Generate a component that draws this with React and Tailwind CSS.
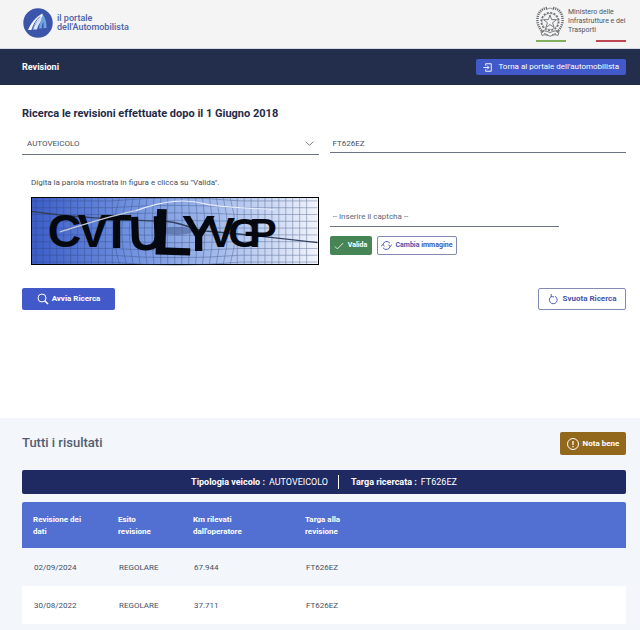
const results = [
  { date: "02/09/2024", outcome: "REGOLARE", km: "67.944", plate: "FT626EZ" },
  { date: "30/08/2022", outcome: "REGOLARE", km: "37.711", plate: "FT626EZ" },
];

const captchaLetters = [
  { char: "C", x: 16, y: 50, size: 47, rotate: 0 },
  { char: "V", x: 46, y: 50, size: 47, rotate: 0 },
  { char: "T", x: 70, y: 52, size: 50, rotate: 0 },
  { char: "U", x: 98, y: 54, size: 50, rotate: -2 },
  { char: "L", x: 120, y: 58, size: 68, rotate: 2 },
  { char: "Y", x: 151, y: 55, size: 51, rotate: 0 },
  { char: "V", x: 176, y: 51, size: 43, rotate: 0 },
  { char: "G", x: 198, y: 51, size: 42, rotate: 0 },
  { char: "P", x: 219, y: 50, size: 42, rotate: 0 },
];

function PortalLogo() {
  return (
    <svg viewBox="0 0 30 30" className="size-[30px] shrink-0" aria-hidden="true">
      <circle cx="15" cy="15" r="14.7" fill="#3a55a9" />
      <path d="M5 22C8 15 12.500 9 19.500 5.500l.5 3C15 11.500 11.500 16 9 22z" fill="#f4f7fd" />
      <path d="M10 21.500C12 16 15 11.500 20 8.500l-.5 4c-3 2-4.500 5-5.500 9z" fill="#d8e6fa" />
      <path d="M17 8.500C13 12 10.500 16.500 8.800 22" fill="none" stroke="#3a55a9" strokeWidth=".9" />
      <path d="M16 20.500c.5-4.500 1.700-8.500 4-14 2.700 4 3.700 9 3.500 13.500l-3 .3c.2-2.500.2-4.600-.3-6.600-.9 2-1.300 4.300-1.400 6.700z" fill="#6fa3e3" />
    </svg>
  );
}

function RepublicEmblem() {
  const star = "M14 9l1.600 4.600 4.900.1-3.900 3 1.400 4.700-4-2.800-4 2.800 1.400-4.700-3.900-3 4.900-.1z";
  return (
    <svg viewBox="0 0 28 32" className="h-8 w-7 shrink-0" fill="none" stroke="#6b6e72" aria-hidden="true">
      <circle cx="14" cy="15.500" r="8.800" strokeWidth="1.500" strokeDasharray="2 1.450" />
      <circle cx="14" cy="15.500" r="8" strokeWidth=".5" />
      <path d="M11 2C4 3 .8 9 1.500 15.500 2 20 4 23.500 7.500 26" strokeWidth="2.400" strokeDasharray="1.200 .9" />
      <path d="M17 2c7 1 10.200 7 9.500 13.500-.5 4.500-2.500 8-6 10.500" strokeWidth="2.400" strokeDasharray="1.200 .9" />
      <path d="M10 3.500Q14 .5 18 3.500" strokeWidth=".7" />
      <path d={star} strokeWidth=".9" fill="#f4f4f4" />
      <path d="M5 25.500c2.500-1.500 5-.5 9 1 4-1.500 6.500-2.500 9-1l-1 4c-2.500-1.500-5-.3-8 .7-3-1-5.500-2.200-8-.7z" strokeWidth=".9" />
      <path d="M8 27.500l4 1.200M20 27.500l-4 1.200" strokeWidth=".8" />
    </svg>
  );
}

function CaptchaImage() {
  const columns = Array.from({ length: 40 }, (_, i) => i * 7 + 4);
  const rows = Array.from({ length: 10 }, (_, i) => i * 7 + 3);
  return (
    <svg
      viewBox="0 0 288 68"
      preserveAspectRatio="none"
      className="block h-[68px] w-full overflow-visible border border-black"
      role="img"
      aria-label="Captcha"
    >
      <defs>
        <linearGradient id="captcha-bg">
          <stop offset="0" stopColor="#3c5dc9" />
          <stop offset=".35" stopColor="#7192df" />
          <stop offset=".65" stopColor="#a3baeb" />
          <stop offset="1" stopColor="#f0f3fb" />
        </linearGradient>
      </defs>
      <rect width="288" height="68" fill="url(#captcha-bg)" />
      <g fill="none" stroke="#2c4272" strokeWidth=".6" opacity=".6">
        {columns.map((x) => {
          const pull = Math.abs(x - 145) < 62 ? (x - 145) * 0.18 : 0;
          return <path key={x} d={`M${x} 0Q${x + pull} 34 ${x} 68`} />;
        })}
        {rows.map((y) => {
          const bend = (y - 34) * 0.2;
          return <path key={y} d={`M0 ${y}H80Q145 ${y + bend} 210 ${y}H288`} />;
        })}
      </g>
      <ellipse cx="146" cy="34" rx="16" ry="4" fill="#4b6395" opacity=".6" />
      <path d="M0 14C40 20 85 22 130 24c22 0 28 8 45 10 45 4 80 8 113 12" fill="none" stroke="#33425f" strokeWidth="1.500" />
      <g fontFamily="'Liberation Sans', Arial, sans-serif" fontWeight="700" fill="#05080f">
        {captchaLetters.map((l, i) => (
          <text key={i} x={l.x} y={l.y} fontSize={l.size} transform={`rotate(${l.rotate} ${l.x} ${l.y})`}>
            {l.char}
          </text>
        ))}
      </g>
      <path d="M28 35C60 25 80 18 105 13" fill="none" stroke="#c5cbd8" strokeWidth="1.200" />
      <path d="M105 13C135 2 155 1 175 6c15 4 40 4 70 6" fill="none" stroke="#e5ebfa" strokeWidth="1.200" />
    </svg>
  );
}

function Icon({ className, children }) {
  return (
    <svg
      viewBox="0 0 24 24"
      className={className}
      fill="none"
      stroke="currentColor"
      strokeWidth="2"
      aria-hidden="true"
    >
      {children}
    </svg>
  );
}

export default function App() {
  return (
    <div className="min-h-screen bg-white font-['Roboto','Open_Sans',sans-serif] text-[8px] text-[#435063]">
      {/* Header */}
      <header className="flex h-[49px] items-start justify-between border-b border-[#d5dbe6] bg-[#f4f4f4] pr-[14px] pl-[23px]">
        <a href="#" className="mt-2 flex items-center gap-1 text-[9px] leading-[9px] font-medium text-[#4b62a8]">
          <PortalLogo />
          <span>
            il portale
            <br />
            dell'Automobilista
          </span>
        </a>
        <div className="mt-[6px] w-[90px]">
          <div className="flex items-start gap-1">
            <RepublicEmblem />
            <p className="mt-[2px] text-[7px] leading-[9px] whitespace-nowrap text-[#4b5563]">
              Ministero delle
              <br />
              Infrastrutture e dei
              <br />
              Trasporti
            </p>
          </div>
          <div className="mt-[2px] flex justify-between">
            <span className="h-[2px] w-[30px] bg-[#80b05c]" />
            <span className="h-[2px] w-[30px] bg-[#c04653]" />
          </div>
        </div>
      </header>

      {/* Navigation */}
      <nav className="flex h-9 items-center justify-between bg-[#222e4b] pr-[14px] pl-[22px] text-white">
        <span className="pt-[2px] text-[9px] font-bold">Revisioni</span>
        <a href="#" className="flex h-4 items-center gap-[6px] rounded-[2px] bg-[#4259c9] px-[7px]">
          <Icon className="size-[9px]">
            <path d="M7 7V2h15v20H7v-5M1 12h14M11 7l5 5-5 5" strokeWidth="2.500" />
          </Icon>
          Torna al portale dell'automobilista
        </a>
      </nav>

      {/* Search form */}
      <main className="h-[333px] pt-[21px] pr-[14px] pl-[22px]">
        <h1 className="text-[11px] leading-4 font-bold text-[#1d2b49]">
          Ricerca le revisioni effettuate dopo il 1 Giugno 2018
        </h1>
        <form onSubmit={(e) => e.preventDefault()}>
          <div className="mt-[10px] grid grid-cols-2 items-start gap-[11px]">
            <div className="relative">
              <select
                aria-label="Tipologia veicolo"
                className="block h-[23px] w-full appearance-none border-b border-[#6b7280] bg-transparent pt-[2px] pl-[5px] text-[8px]"
              >
                <option>AUTOVEICOLO</option>
              </select>
              <Icon className="pointer-events-none absolute top-[7px] right-[5px] size-[9px]">
                <path d="M2 7l10 10L22 7" />
              </Icon>
            </div>
            <input
              aria-label="Targa"
              defaultValue="FT626EZ"
              className="h-[21px] w-full border-b border-[#6b7280] bg-transparent px-[3px] pt-[2px] text-[8px] outline-none"
            />
          </div>

          <div className="mt-[22px] grid grid-cols-2 items-start gap-[11px]">
            <div className="pl-[9px]">
              <label htmlFor="captcha" className="mb-2 block leading-3">
                Digita la parola mostrata in figura e clicca su "Valida".
              </label>
              <CaptchaImage />
            </div>
            <div className="pt-[30px]">
              <input
                id="captcha"
                placeholder="-- Inserire il captcha --"
                className="block h-5 w-[229px] max-w-full border-b border-[#6b7280] bg-transparent px-[3px] text-[8px] outline-none placeholder:text-[#5c6877]"
              />
              <div className="mt-[9px] flex gap-[5px] text-[7px] font-bold whitespace-nowrap">
                <button
                  type="button"
                  className="flex h-[19px] w-[42px] items-center justify-center gap-1 rounded-[2px] bg-[#478556] text-white"
                >
                  <Icon className="size-[10px]">
                    <path d="M2 13l6 6L22 5" />
                  </Icon>
                  Valida
                </button>
                <button
                  type="button"
                  className="flex h-[19px] w-20 items-center justify-center gap-1 rounded-[2px] border border-[#8289b5] text-[#4656ae]"
                >
                  <Icon className="size-[11px] shrink-0">
                    <path d="M4 11a8.500 8.500 0 0 1 15.500-4M20 13a8.500 8.500 0 0 1-15.500 4M0 14l4-4 4 4M16 10l4 4 4-4" />
                  </Icon>
                  Cambia immagine
                </button>
              </div>
            </div>
          </div>

          <div className="mt-[23px] flex justify-between text-[8px] font-bold">
            <button
              type="submit"
              className="flex h-[22px] w-[93px] items-center justify-center gap-[3px] rounded-[2px] bg-[#4259c9] text-white"
            >
              <Icon className="size-3">
                <circle cx="10" cy="10" r="8" />
                <path d="M16 16l6 6" strokeWidth="3" />
              </Icon>
              Avvia Ricerca
            </button>
            <button
              type="reset"
              className="flex h-[22px] w-[88px] items-center justify-center gap-1 rounded-[2px] border border-[#8289b5] text-[#4656ae]"
            >
              <Icon className="size-[11px]">
                <path d="M8 5a8.500 8.500 0 1 0 7 0M7 0v6h6" />
              </Icon>
              Svuota Ricerca
            </button>
          </div>
        </form>
      </main>

      {/* Results */}
      <section className="bg-[#f3f6fb] pt-[14px] pr-[14px] pb-[6px] pl-[22px]">
        <div className="flex h-[23px] items-center justify-between">
          <h2 className="pb-[2px] text-[13px] leading-5 font-medium text-[#505c70]">Tutti i risultati</h2>
          <button
            type="button"
            className="flex h-[23px] w-[66px] items-center justify-center gap-1 rounded-[2px] bg-[#92681d] text-[8px] font-bold text-white"
          >
            <Icon className="size-3">
              <circle cx="12" cy="12" r="11" />
              <path d="M12 6v8M12 16v2.500" strokeWidth="2.500" />
            </Icon>
            Nota bene
          </button>
        </div>

        <div className="mt-[15px] flex h-6 items-center justify-center rounded-[2px] bg-[#1f2a62] text-[9px] text-white">
          <p className="flex gap-1 border-r border-white pr-[10px] leading-[14px]">
            <strong>Tipologia veicolo :</strong> AUTOVEICOLO
          </p>
          <p className="flex gap-1 pl-3 leading-[14px]">
            <strong>Targa ricercata :</strong> FT626EZ
          </p>
        </div>

        <table className="mt-2 w-full table-fixed text-left">
          <colgroup>
            <col className="w-[85px]" />
            <col className="w-[75px]" />
            <col className="w-[112px]" />
            <col />
          </colgroup>
          <thead className="bg-[#5270d1] leading-3 text-white">
            <tr className="h-[46px]">
              <th className="rounded-tl-[2px] pt-[2px] pl-[11px]">
                Revisione dei
                <br />
                dati
              </th>
              <th className="pt-[2px] pl-[11px]">
                Esito
                <br />
                revisione
              </th>
              <th className="pt-[2px] pl-[11px]">
                Km rilevati
                <br />
                dall'operatore
              </th>
              <th className="rounded-tr-[2px] pt-[2px] pl-[11px]">
                Targa alla
                <br />
                revisione
              </th>
            </tr>
          </thead>
          <tbody>
            {results.map((r) => (
              <tr key={r.date} className="h-[38px] even:bg-white">
                <td className="pt-[2px] pl-3">{r.date}</td>
                <td className="pt-[2px] pl-3">{r.outcome}</td>
                <td className="pt-[2px] pl-3">{r.km}</td>
                <td className="pt-[2px] pl-3">{r.plate}</td>
              </tr>
            ))}
          </tbody>
        </table>
      </section>
    </div>
  );
}
